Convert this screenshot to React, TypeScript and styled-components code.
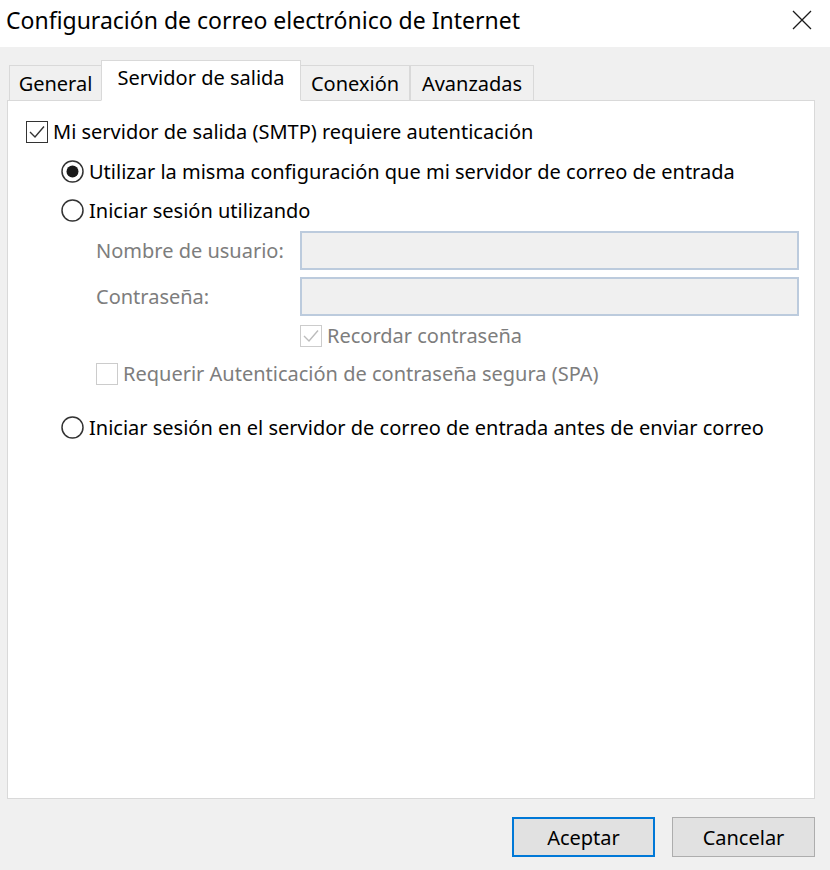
import styled, { createGlobalStyle } from "styled-components";

const GlobalStyle = createGlobalStyle`
  html, body {
    margin: 0;
    padding: 0;
    background: #f0f0f0;
  }
  body {
    font-family: "Noto Sans", "Open Sans", sans-serif;
    color: #000;
  }
`;

const CheckBox = ({ checked, disabled }: { checked?: boolean; disabled?: boolean }) => (
  <svg width="22" height="22" viewBox="0 0 22 22">
    <rect x="0.5" y="0.5" width="21" height="21" fill="#fff" stroke={disabled ? "#cccccc" : "#333333"} />
    {checked && (
      <path d="M4 11 L9 16 L18 5.5" fill="none" stroke={disabled ? "#bcbcbc" : "#333333"} strokeWidth="1.4" />
    )}
  </svg>
);

const Radio = ({ checked }: { checked?: boolean }) => (
  <svg width="23" height="23" viewBox="0 0 23 23">
    <circle cx="11.5" cy="11.5" r="10.5" fill="#fff" stroke="#333333" strokeWidth="1.5" />
    {checked && <circle cx="11.5" cy="11.5" r="6" fill="#1a1a1a" />}
  </svg>
);

const App = () => {
  return (
    <Window>
      <GlobalStyle />
      <TitleBar>
        <Title>Configuración de correo electrónico de Internet</Title>
        <CloseIcon viewBox="0 0 20 20">
          <path d="M1 1 L19 19 M19 1 L1 19" stroke="#1a1a1a" strokeWidth="1.3" />
        </CloseIcon>
      </TitleBar>
      <Body>
        <Tabs>
          <Tab $width={93}>General</Tab>
          <Tab $width={200} $active>Servidor de salida</Tab>
          <Tab $width={110}>Conexión</Tab>
          <Tab $width={124}>Avanzadas</Tab>
        </Tabs>
        <Panel>
          <OptionRow $top={19}>
            <CheckBox checked />
            <span>Mi servidor de salida (SMTP) requiere autenticación</span>
          </OptionRow>
          <OptionRow $top={17} $indent={35}>
            <Radio checked />
            <span>Utilizar la misma configuración que mi servidor de correo de entrada</span>
          </OptionRow>
          <OptionRow $top={16} $indent={35}>
            <Radio />
            <span>Iniciar sesión utilizando</span>
          </OptionRow>
          <FieldGrid>
            <FieldLabel>Nombre de usuario:</FieldLabel>
            <Field />
            <FieldLabel>Contraseña:</FieldLabel>
            <Field />
          </FieldGrid>
          <OptionRow $top={8} $indent={274} $muted>
            <CheckBox checked disabled />
            <span>Recordar contraseña</span>
          </OptionRow>
          <OptionRow $top={15} $indent={70} $muted>
            <CheckBox disabled />
            <span>Requerir Autenticación de contraseña segura (SPA)</span>
          </OptionRow>
          <OptionRow $top={31} $indent={35}>
            <Radio />
            <span>Iniciar sesión en el servidor de correo de entrada antes de enviar correo</span>
          </OptionRow>
        </Panel>
        <Footer>
          <Button $primary>Aceptar</Button>
          <Button>Cancelar</Button>
        </Footer>
      </Body>
    </Window>
  );
};

const Window = styled.div`
  width: 830px;
  height: 870px;
  display: flex;
  flex-direction: column;
  background: #f0f0f0;
  overflow: hidden;
`;

const TitleBar = styled.div`
  height: 47px;
  background: #fff;
  display: flex;
  align-items: center;
  justify-content: space-between;
  padding: 0 18px 7px 6px;
  box-sizing: border-box;
`;

const Title = styled.span`
  font-size: 23px;
  letter-spacing: 0;
`;

const CloseIcon = styled.svg`
  width: 20px;
  height: 20px;
`;

const Body = styled.div`
  flex: 1;
  display: flex;
  flex-direction: column;
  padding: 13px 15px 0 7px;
`;

const Tabs = styled.div`
  display: flex;
  align-items: flex-end;
  height: 41px;
  padding-left: 2px;
  margin-bottom: -1px;
  position: relative;
  z-index: 1;
`;

const Tab = styled.div<{ $active?: boolean; $width: number }>`
  width: ${(p) => p.$width}px;
  height: ${(p) => (p.$active ? 41 : 36)}px;
  box-sizing: border-box;
  display: flex;
  justify-content: center;
  align-items: ${(p) => (p.$active ? "flex-start" : "center")};
  padding-top: ${(p) => (p.$active ? "3px" : "0")};
  font-size: 20px;
  white-space: nowrap;
  background: ${(p) => (p.$active ? "#fff" : "#f0f0f0")};
  border: 1px solid #d9d9d9;
  border-bottom: ${(p) => (p.$active ? "1px solid #fff" : "1px solid #d9d9d9")};
  margin-left: ${(p) => (p.$active ? "-1px" : "0")};
  margin-right: ${(p) => (p.$active ? "-1px" : "0")};
  position: relative;
  z-index: ${(p) => (p.$active ? 2 : 1)};
`;

const Panel = styled.div`
  height: 699px;
  box-sizing: border-box;
  background: #fff;
  border: 1px solid #d9d9d9;
  padding: 0 16px 0 18px;
  display: flex;
  flex-direction: column;
`;

const OptionRow = styled.div<{ $top: number; $indent?: number; $muted?: boolean }>`
  display: flex;
  align-items: center;
  gap: 5px;
  height: 23px;
  margin-top: ${(p) => p.$top}px;
  margin-left: ${(p) => p.$indent ?? 0}px;
  font-size: 20px;
  color: ${(p) => (p.$muted ? "#7d7d7d" : "#000")};
  white-space: nowrap;
  svg {
    flex: none;
  }
`;

const FieldGrid = styled.div`
  display: grid;
  grid-template-columns: 204px 499px;
  grid-auto-rows: 39px;
  row-gap: 7px;
  margin: 9px 0 0 70px;
  align-items: center;
`;

const FieldLabel = styled.span`
  font-size: 20px;
  color: #7d7d7d;
`;

const Field = styled.div`
  height: 39px;
  box-sizing: border-box;
  background: #f0f0f0;
  border: 2px solid #bccbdd;
`;

const Footer = styled.div`
  display: flex;
  justify-content: flex-end;
  gap: 17px;
  margin-top: 18px;
`;

const Button = styled.div<{ $primary?: boolean }>`
  width: 143px;
  height: 40px;
  box-sizing: border-box;
  display: flex;
  align-items: center;
  justify-content: center;
  background: #e1e1e1;
  border: ${(p) => (p.$primary ? "2px solid #0078d7" : "1px solid #adadad")};
  font-size: 20px;
`;

export default App;
